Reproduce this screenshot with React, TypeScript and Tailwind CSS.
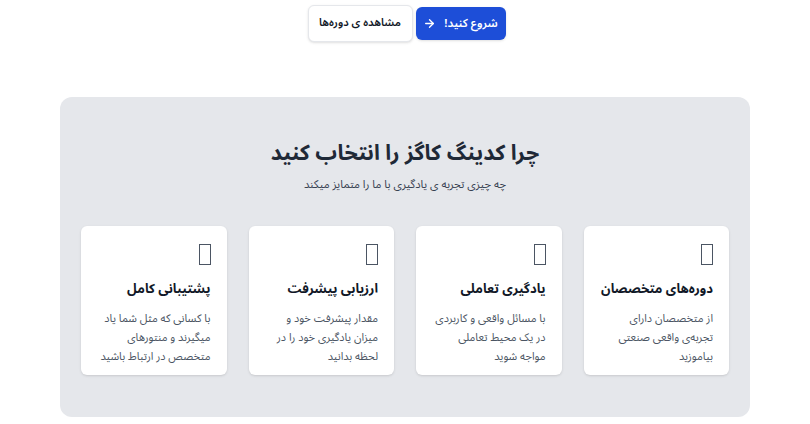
// App.tsx — بخش «چرا کدینگ کاگز» با دکمه‌های شروع

const features = [
  {
    title: 'دوره‌های متخصصان',
    text: 'از متخصصان دارای تجربه‌ی واقعی صنعتی بیاموزید',
  },
  {
    title: 'یادگیری تعاملی',
    text: 'با مسائل واقعی و کاربردی در یک محیط تعاملی مواجه شوید',
  },
  {
    title: 'ارزیابی پیشرفت',
    text: 'مقدار پیشرفت خود و میزان یادگیری خود را در لحظه بدانید',
  },
  {
    title: 'پشتیبانی کامل',
    text: 'با کسانی که مثل شما یاد میگیرند و منتورهای متخصص در ارتباط باشید',
  },
];

export default function App() {
  return (
    <div
      dir="rtl"
      className="w-[810px] h-[424px] bg-white overflow-hidden"
      style={{ fontFamily: '"Noto Sans Arabic", "Noto Sans", "DejaVu Sans", sans-serif' }}
    >
      {/* دکمه‌ها */}
      <div className="flex justify-center items-center gap-[3px] pt-[5px] pl-[3px]">
        <button className="h-[33px] w-[90px] flex items-center justify-center gap-[8px] whitespace-nowrap rounded-md bg-[#1d4ed8] text-white text-[11.5px] font-semibold shadow-sm">
          شروع کنید!
          <svg width="13" height="13" viewBox="0 0 24 24" fill="none" stroke="currentColor" strokeWidth="2.5" strokeLinecap="round" strokeLinejoin="round">
            <path d="M5 12h14" />
            <path d="M12 5l7 7-7 7" />
          </svg>
        </button>
        <button className="h-[37px] w-[105px] whitespace-nowrap rounded-md border border-gray-200 bg-white text-[#111827] text-[11px] font-semibold shadow-sm">
          مشاهده ی دوره‌ها
        </button>
      </div>

      {/* بخش ویژگی‌ها */}
      <div className="mx-[60px] mt-[55px] rounded-xl bg-[#e5e7eb] px-[21px] pt-[41px] pb-[42px]">
        <h2 className="text-center text-[21.5px] font-bold text-[#1f2937] leading-[30px]">
          چرا کدینگ کاگز را انتخاب کنید
        </h2>
        <p className="mt-[8px] text-center text-[11.2px] leading-[18px] text-[#374151]">
          چه چیزی تجربه ی یادگیری با ما را متمایز میکند
        </p>

        <div className="mt-[32px] grid grid-cols-4 gap-[22px]">
          {features.map(f => (
            <div key={f.title} className="h-[149px] rounded-md bg-white px-[16px] pt-[18px] shadow-sm">
              <div className="h-[21px] w-[12px] border-[1.5px] border-[#4b5563]" />
              <h3 className="mt-[12px] text-[13px] font-bold text-[#111827] leading-[24px]">{f.title}</h3>
              <p className="mt-[8px] text-[11px] leading-[19px] text-[#4b5563]">{f.text}</p>
            </div>
          ))}
        </div>
      </div>
    </div>
  );
}
